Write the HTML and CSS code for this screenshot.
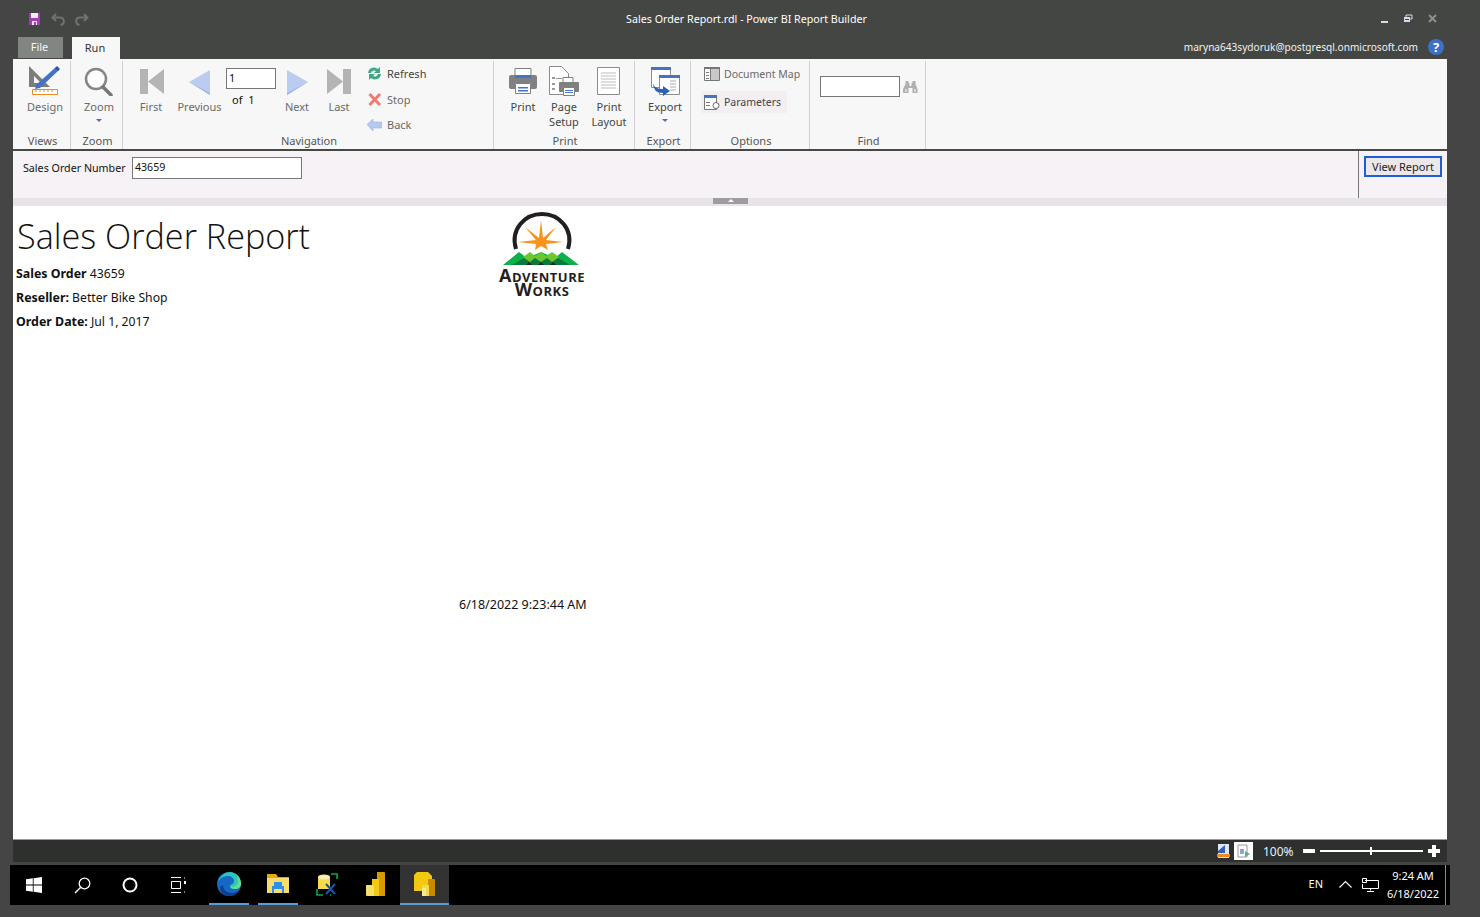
FILE: index.html
```html
<!DOCTYPE html>
<html lang="en">
<head>
    <meta charset="UTF-8">
    <title>Sales Order Report.rdl - Power BI Report Builder</title>
    <link rel="stylesheet" href="styles.css">
</head>
<body>
    <div class="titlebar">
        <div class="quick">
            <svg width="11" height="12" viewBox="0 0 11 12"><path d="M0 0h11v12H0z" fill="#a23bb8"/><path d="M2 0h7v5H2z" fill="#f4eaf6"/><path d="M3 8h5v4H3z" fill="#f4eaf6"/><path d="M5 9h2v3H5z" fill="#a23bb8"/></svg>
            <svg class="undo" width="15" height="13" viewBox="0 0 15 13"><path d="M5 1 1.500 4.500 5 8M2 4.500h7c5 0 5 7 .5 7.500" fill="none" stroke="#6f726f" stroke-width="2"/></svg>
            <svg class="redo" width="15" height="13" viewBox="0 0 15 13"><path d="M10 1l3.500 3.500L10 8M13 4.500H6c-5 0-5 7-.5 7.500" fill="none" stroke="#6f726f" stroke-width="2"/></svg>
        </div>
        <div class="doc-title">Sales Order Report.rdl - Power BI Report Builder</div>
        <div class="win-buttons">
            <svg width="9" height="9" viewBox="0 0 9 9"><path d="M1 7h7v2H1z" fill="#d5dbe8"/></svg>
            <svg width="9" height="9" viewBox="0 0 9 9"><path d="M2 1h6v4H2z" fill="none" stroke="#d5dbe8"/><path d="M0 3h6v5H0z" fill="#d5dbe8"/><path d="M1 5h4v1H1z" fill="#434643"/></svg>
            <svg width="9" height="9" viewBox="0 0 9 9"><path d="M1 1l7 7M8 1 1 8" stroke="#8c908f" stroke-width="2"/></svg>
        </div>
    </div>

    <div class="tabrow">
        <div class="tab tab-file">File</div>
        <div class="tab tab-run">Run</div>
        <div class="account">maryna643sydoruk@postgresql.onmicrosoft.com</div>
        <div class="help">?</div>
    </div>

    <div class="ribbon">
        <div class="group views">
            <div class="items">
                <div class="big w-design">
                    <svg width="32" height="31" viewBox="0 0 32 31"><path d="M0 1v21h21zM5 11v7h7z" fill="#7d7d7d" fill-rule="evenodd"/><path d="M7 20 27 2l3 3-19 18-5 1z" fill="#4472c4"/><path d="M26 3l2-2 3 3-2 2z" fill="#2f5597"/><path d="M3.500 24.500h25v5h-25z" fill="#fff" stroke="#ed8b22"/><path d="M7 25v2M11 25v2M15 25v2M19 25v2M23 25v2" stroke="#ed8b22"/></svg>
                    <span>Design</span>
                </div>
            </div>
            <div class="group-label">Views</div>
        </div>
        <div class="group zoom">
            <div class="items">
                <div class="big w-zoom">
                    <svg width="30" height="31" viewBox="0 0 30 31"><circle cx="12" cy="14" r="10" fill="#fdfdfd" stroke="#858585" stroke-width="2.500"/><path d="M19 22l8 8" stroke="#777" stroke-width="3.500" stroke-linecap="round"/></svg>
                    <span>Zoom</span>
                    <i class="caret"></i>
                </div>
            </div>
            <div class="group-label">Zoom</div>
        </div>
        <div class="group nav">
            <div class="items">
                <div class="big w-first">
                    <svg width="24" height="31" viewBox="0 0 24 31"><path d="M0 4h8v25H0zM8 16.500 24 4v25z" fill="#b4b4b4"/></svg>
                    <span>First</span>
                </div>
                <div class="big w-prev">
                    <svg width="21" height="31" viewBox="0 0 21 31"><path d="M0 17 21 5v25z" fill="#bccbf0"/><path d="M0 17l21 13v-2z" fill="#9fb3e3"/></svg>
                    <span>Previous</span>
                </div>
                <div class="page-box">
                    <div class="page-input">1</div>
                    <div class="page-of">of&nbsp; 1</div>
                </div>
                <div class="big w-next">
                    <svg width="21" height="31" viewBox="0 0 21 31"><path d="M21 17 0 5v25z" fill="#bccbf0"/><path d="M21 17 0 30v-2z" fill="#9fb3e3"/></svg>
                    <span>Next</span>
                </div>
                <div class="big w-last">
                    <svg width="24" height="31" viewBox="0 0 24 31"><path d="M16 4h8v25h-8zM16 16.500 0 4v25z" fill="#b4b4b4"/></svg>
                    <span>Last</span>
                </div>
                <div class="small-col">
                    <div class="small on">
                        <svg width="15" height="15" viewBox="0 0 15 15"><path d="M1 7a6 6 0 0 1 10-4l2-2v6H7l2-2a3.500 3.500 0 0 0-5 2z" fill="#43a586"/><path d="M14 8a6 6 0 0 1-10 4l-2 2V8h6l-2 2a3.500 3.500 0 0 0 5-2z" fill="#43a586"/></svg>
                        <span>Refresh</span>
                    </div>
                    <div class="small">
                        <svg width="15" height="15" viewBox="0 0 15 15"><path d="M2.500 2l10.500 11M13 2 2.500 13" stroke="#f07a70" stroke-width="3"/></svg>
                        <span>Stop</span>
                    </div>
                    <div class="small">
                        <svg width="15" height="15" viewBox="0 0 15 15"><path d="M0 7.500 6 2v3h9v6H6v3z" fill="#b6c8ef" stroke="#9fb3e3" stroke-width=".6"/></svg>
                        <span>Back</span>
                    </div>
                </div>
            </div>
            <div class="group-label">Navigation</div>
        </div>
        <div class="group print">
            <div class="items">
                <div class="big w-print">
                    <svg width="28" height="31" viewBox="0 0 28 31"><path d="M6 3.500h16v8H6z" fill="#fff" stroke="#808080"/><path d="M2 10h24q2 0 2 2v10q0 2-2 2h-4v-6H6v6H2q-2 0-2-2V12q0-2 2-2z" fill="#808080"/><path d="M6 10h16v3H6z" fill="#4472c4"/><path d="M6.500 18.500h15v10h-15z" fill="#fff" stroke="#808080"/><path d="M9 22h10v1.500H9zM9 25h10v1.500H9z" fill="#4472c4"/></svg>
                    <span>Print</span>
                </div>
                <div class="big w-setup">
                    <svg width="30" height="31" viewBox="0 0 30 31"><path d="M.5 1.500h12l7 7v21H.5z" fill="#fff" stroke="#8c8c8c"/><path d="M3 12h3v2H3zM3 18h3v2H3zM3 23h3v2H3zM7 13h6v1H7z" fill="#999"/><path d="M14 12.500h10v6H14z" fill="#fff" stroke="#808080"/><path d="M11 17h18q1 0 1 1v8q0 1-1 1h-3v-4H14v4h-3q-1 0-1-1v-8q0-1 1-1z" fill="#808080"/><path d="M14.500 22.500h11v8h-11z" fill="#fff" stroke="#808080"/><path d="M16 25h8v1H16zM16 27h8v1H16z" fill="#4472c4"/></svg>
                    <span>Page<br>Setup</span>
                </div>
                <div class="big w-layout">
                    <svg width="24" height="31" viewBox="0 0 24 31"><path d="M.5 2.500h22v27H.5z" fill="#fff" stroke="#8c8c8c"/><path d="M4 8h15M4 11h15M4 14h15M4 17h15M4 20h15M4 23h15" stroke="#bdbdbd"/></svg>
                    <span>Print<br>Layout</span>
                </div>
            </div>
            <div class="group-label">Print</div>
        </div>
        <div class="group export">
            <div class="items">
                <div class="big w-export">
                    <svg width="29" height="31" viewBox="0 0 29 31"><path d="M.5 2.500h19v20H.5z" fill="#fff" stroke="#8c8c8c"/><path d="M0 2h20v3H0z" fill="#4472c4"/><path d="M8.500 10.500h20v19h-20z" fill="#fff" stroke="#8c8c8c"/><path d="M8 10h21v3H8z" fill="#4472c4"/><path d="M19 16h6M19 19h6M19 22h6M19 25h6" stroke="#aaa"/><path d="M2 18q1 6 10 6v-3l7 5-7 5v-3Q2 28 2 18z" fill="#2f62b5"/></svg>
                    <span>Export</span>
                    <i class="caret"></i>
                </div>
            </div>
            <div class="group-label">Export</div>
        </div>
        <div class="group options">
            <div class="items">
                <div class="small-col">
                    <div class="small">
                        <svg width="16" height="14" viewBox="0 0 16 14"><path d="M.5.500h15v13H.5z" fill="#fff" stroke="#777"/><path d="M0 0h16v2H0zM6 2h1v12H6z" fill="#777"/><path d="M7 2h8v11H7z" fill="#c8c8c8"/><path d="M2 5h3v1H2zM2 8h3v1H2zM2 11h3v1H2z" fill="#777"/></svg>
                        <span>Document Map</span>
                    </div>
                    <div class="small picked">
                        <svg width="16" height="16" viewBox="0 0 16 16"><path d="M.5 1.500h12v14H.5z" fill="#fff" stroke="#777"/><path d="M0 1h13v3H0z" fill="#4472c4"/><path d="M2 8h4v1H2zM2 11h4v1H2z" fill="#777"/><circle cx="12" cy="11.500" r="3" fill="#fff" stroke="#666"/></svg>
                        <span>Parameters</span>
                    </div>
                </div>
            </div>
            <div class="group-label">Options</div>
        </div>
        <div class="group find">
            <div class="items">
                <div class="find-input"></div>
                <svg class="binoculars" width="15" height="14" viewBox="0 0 15 14"><path d="M2.500 1h3v2h1v3h2V3h1V1h3v3l2 5v4H9.500V8h-4v5H0V9l2.500-5z" fill="#b0b0b0"/><path d="M2 9h2v3H2zM11 9h2v3h-2z" fill="#d8d8d8"/></svg>
            </div>
            <div class="group-label">Find</div>
        </div>
    </div>

    <div class="params">
        <div class="param-fields">
            <label class="param-label">Sales Order Number</label>
            <div class="param-input">43659</div>
        </div>
        <div class="param-action">
            <div class="view-btn">View Report</div>
        </div>
    </div>
    <div class="splitter"><div class="grip"></div></div>

    <div class="report">
        <div class="report-head">
            <div class="report-info">
                <h1>Sales Order Report</h1>
                <p><b>Sales Order</b> 43659</p>
                <p><b>Reseller:</b> Better Bike Shop</p>
                <p><b>Order Date:</b> Jul 1, 2017</p>
            </div>
            <div class="logo">
                <svg width="88" height="56" viewBox="0 0 88 56">
                    <path d="M18 38C12 18 27 3 44 3s32 15 26 35" fill="none" stroke="#231f20" stroke-width="4"/>
                    <path d="M43 9l2 18 13-11-10 13 17 2-17 2 2 6-7-4-6 4 1-6-18-2 18-2-11-13 14 11z" fill="#f7941d"/>
                    <path d="M5 54 21 41l8 6 14-6 14 6 7-6 17 13z" fill="#0db14b"/>
                    <path d="M25 46l7-5 5 4 6-4 5 4 6-4 7 5-6 5H31z" fill="#6cc72e"/>
                    <path d="M14 54l12-7 6 4 5-4 6 4 6-4 5 4 6-4 12 7z" fill="#0a7a3a"/>
                    <path d="M28 54l3-3 3 3zM40 54l3-3 3 3zM52 54l3-3 3 3z" fill="#231f20"/>
                </svg>
                <div class="logo-line">Adventure</div>
                <div class="logo-line">Works</div>
            </div>
        </div>
        <div class="report-stamp">6/18/2022 9:23:44 AM</div>
    </div>

    <div class="statusbar">
        <svg class="st-icon" width="13" height="14" viewBox="0 0 13 14"><path d="M1 0h11v14H1z" fill="#dfe6f2"/><path d="M1 7l7-6v8H1z" fill="#2f62b5"/><path d="M0 10h13v3H0z" fill="#ed8b22"/></svg>
        <div class="st-print">
            <svg width="14" height="14" viewBox="0 0 14 14"><path d="M1 1h9v12H1z" fill="#fff" stroke="#999"/><path d="M3 5h4v5H3z" fill="#8aa4d6"/><path d="M8 7l5 3-5 3z" fill="#59b08d"/></svg>
        </div>
        <div class="st-percent">100%</div>
        <div class="st-minus"></div>
        <div class="st-slider"><i></i></div>
        <div class="st-plus"></div>
    </div>

    <div class="taskbar">
        <div class="tb-btn">
            <svg width="16" height="16" viewBox="0 0 16 16"><path d="M0 2.300 6.800 1.300v6.300H0zM7.600 1.200 16 0v7.600H7.600zM0 8.400h6.800v6.300L0 13.700zM7.600 8.400H16V16l-8.400-1.200z" fill="#fff"/></svg>
        </div>
        <div class="tb-btn">
            <svg width="17" height="17" viewBox="0 0 17 17"><circle cx="10.500" cy="6.500" r="5.300" fill="none" stroke="#fff" stroke-width="1.300"/><path d="M6.500 10.500 1 16" stroke="#fff" stroke-width="1.500"/></svg>
        </div>
        <div class="tb-btn">
            <svg width="16" height="16" viewBox="0 0 16 16"><circle cx="8" cy="8" r="6.500" fill="none" stroke="#fff" stroke-width="2"/></svg>
        </div>
        <div class="tb-btn tb-gap">
            <svg width="16" height="16" viewBox="0 0 16 16"><path d="M1 .500h10M1 15.500h10M1.500 4.500h9v7h-9z" fill="none" stroke="#fff"/><path d="M14 4h2v3h-2zM14 .5h1v1h-1zM14 14.500h1v1h-1z" fill="#fff"/></svg>
        </div>
        <div class="tb-app running">
            <svg width="24" height="24" viewBox="0 0 24 24"><circle cx="12" cy="12" r="12" fill="#1668c4"/><path d="M1 10C3 3 9 0 13 0c6 0 11 5 11 12 0 3-3 5-6 5-4 0-5-2-5-3 0-2 4-1 4-5 0-3-3-5-6-5-4 0-8 2-10 6z" fill="#2bc6b8"/><path d="M20 3c3 3 4 6 4 9 0 3-3 5-6 5-3 0-4-1-5-2 3 0 8-1 8-5 0-3-1-5-1-7z" fill="#5fe08c"/><path d="M6 13c0 5 4 8 9 8 3 0 5-1 7-3-2 4-6 6-10 6-5 0-9-4-9-9z" fill="#0c3f94"/></svg>
        </div>
        <div class="tb-app running">
            <svg width="22" height="20" viewBox="0 0 22 20"><path d="M0 0h9l2 3h11v16H0z" fill="#e8a80e"/><path d="M0 4h22v15H0z" fill="#fadc6c"/><path d="M5 12h12v7h-2v-4H7v4H5z" fill="#2f8ee0"/><path d="M7 8h8v4H7z" fill="#2f8ee0"/></svg>
        </div>
        <div class="tb-app">
            <svg width="22" height="23" viewBox="0 0 22 23"><path d="M2 5c0-4 12-4 12 0v11H2z" fill="#f5dc4e"/><ellipse cx="8" cy="4" rx="6" ry="2.500" fill="#f9ecb0"/><path d="M15 1h6v5M1 16v6h6M15 22h-1" fill="none" stroke="#0aa64a" stroke-width="1.600"/><path d="M10 11l9 10M19 11l-9 10" stroke="#1a55b0" stroke-width="2"/></svg>
        </div>
        <div class="tb-app">
            <svg width="19" height="24" viewBox="0 0 19 24"><path d="M11 0h7q1 0 1 1v23h-8z" fill="#d99a00"/><path d="M6 7h7v17H6z" fill="#f2c811"/><path d="M0 13h7q1 0 1 1v10H1q-1 0-1-1z" fill="#f7e06a"/></svg>
        </div>
        <div class="tb-app running active">
            <svg width="21" height="25" viewBox="0 0 21 25"><path d="M3 0h11l4 4v15H0V3z" fill="#f2c811"/><path d="M14 7h6q1 0 1 1v16h-7z" fill="#c98a00"/><path d="M8 13h7v11H8z" fill="#f5d94a"/><path d="M8 16h4v8H9q-1 0-1-1z" fill="#f8ea94"/></svg>
        </div>
        <div class="tray">
            <span class="tray-lang">EN</span>
            <svg class="tray-chevron" width="13" height="8" viewBox="0 0 13 8"><path d="M.5 7.500l6-6 6 6" fill="none" stroke="#fff" stroke-width="1.200"/></svg>
            <svg class="tray-net" width="17" height="14" viewBox="0 0 17 14"><path d="M3 2.500h13.500v8H.5V6" fill="none" stroke="#fff"/><path d="M.5.500h4v4h-4zM8.500 10.500v2M5 13.500h7" fill="none" stroke="#fff"/></svg>
            <div class="clock"><div>9:24 AM</div><div>6/18/2022</div></div>
        </div>
    </div>
</body>
</html>
```

FILE: styles.css
```css
html, body {
    margin: 0;
    height: 917px;
    overflow: hidden;
}
body {
    background-color: #454545;
    font-family: "Noto Sans", Arial, sans-serif;
    font-size: 11px;
    color: #444;
}
svg {
    display: block;
    flex: none;
}
.titlebar {
    display: grid;
    grid-template-columns: 1fr auto 1fr;
    align-items: center;
    height: 37px;
    margin-left: 13px;
    background-color: #434643;
    color: #fff;
}
.quick {
    display: flex;
    align-items: center;
    padding: 1px 0 0 16px;
}
.undo {
    margin-left: 11px;
}
.redo {
    margin-left: 8px;
}
.doc-title {
    font-size: 10.700px;
}
.win-buttons {
    display: flex;
    justify-content: flex-end;
    gap: 15px;
    padding-right: 43px;
}
.tabrow {
    display: flex;
    align-items: flex-start;
    width: 1434px;
    height: 22px;
    margin-left: 13px;
    background-color: #434643;
}
.tab {
    display: flex;
    align-items: center;
    justify-content: center;
    box-sizing: border-box;
    padding: 0 2px 2px 0;
}
.tab-file {
    width: 45px;
    height: 21px;
    margin-left: 5px;
    background-color: #828682;
    color: #f4f4f4;
}
.tab-run {
    width: 48px;
    height: 22px;
    margin-left: 9px;
    background-color: #f7f7f7;
    color: #333;
}
.account {
    margin-left: auto;
    color: #f2f2f2;
    font-size: 10.100px;
    line-height: 20px;
}
.help {
    width: 16px;
    height: 16px;
    margin: 2px 3px 0 10px;
    border-radius: 50%;
    background-color: #3f6fc6;
    color: #fff;
    font-size: 13px;
    font-weight: 700;
    line-height: 16px;
    text-align: center;
}
.ribbon {
    display: flex;
    width: 1434px;
    height: 90px;
    margin-left: 13px;
    background-color: #f7f7f7;
}
.group {
    display: flex;
    flex-direction: column;
    box-sizing: border-box;
    height: 88px;
    margin-top: 2px;
    border-right: 1px solid #cfcfcf;
}
.views { width: 58px; }
.zoom { width: 52px; }
.nav { width: 371px; }
.print { width: 141px; }
.export { width: 56px; }
.options { width: 119px; }
.find { width: 116px; }
.items {
    display: flex;
    flex: none;
    box-sizing: border-box;
    height: 73px;
    padding-top: 4px;
}
.group-label {
    padding-left: 2px;
    line-height: 14px;
    text-align: center;
    color: #555;
}
.big {
    display: flex;
    flex-direction: column;
    align-items: center;
    flex: none;
    line-height: 15px;
    text-align: center;
    color: #6a6a6a;
}
.big svg {
    margin-bottom: 3px;
}
.big.w-print, .big.w-setup, .big.w-layout, .big.w-export {
    color: #444;
}
.w-design { width: 50px; margin-left: 7px; }
.w-zoom { width: 40px; margin-left: 8px; }
.w-first { width: 30px; margin-left: 13px; }
.w-first svg { margin-left: 2px; }
.w-prev { width: 49px; margin-left: 9px; }
.w-next { width: 34px; margin-left: 4px; }
.w-last { width: 34px; margin-left: 8px; }
.w-print { width: 32px; margin-left: 13px; }
.w-setup { width: 36px; margin-left: 7px; }
.w-layout { width: 40px; margin-left: 7px; }
.w-export { width: 40px; margin-left: 10px; }
.caret {
    width: 0;
    height: 0;
    margin-top: 5px;
    border-left: 3px solid transparent;
    border-right: 3px solid transparent;
    border-top: 3px solid #5a6ea8;
}
.page-box {
    width: 50px;
    margin-left: 2px;
    padding-top: 3px;
}
.page-input {
    box-sizing: border-box;
    height: 21px;
    padding-left: 2px;
    border: 1px solid #777;
    background-color: #fff;
    color: #111;
    line-height: 18px;
}
.page-of {
    padding-left: 6px;
    line-height: 22px;
    color: #111;
}
.small-col {
    display: flex;
    flex-direction: column;
    margin: -4px 0 0 11px;
}
.small {
    display: flex;
    align-items: center;
    flex: none;
    gap: 5px;
    height: 25.500px;
    line-height: 15px;
    white-space: nowrap;
    color: #6a6a6a;
}
.small.on {
    color: #444;
}
.options .small-col {
    align-items: flex-start;
    margin: -2px 0 0 10px;
}
.options .small {
    gap: 4px;
    height: 22px;
    padding: 0 6px 0 3px;
    font-size: 10.500px;
}
.options .small + .small {
    margin-top: 6px;
}
.picked {
    background-color: #f2eef2;
    color: #444;
}
.find-input {
    box-sizing: border-box;
    width: 80px;
    height: 21px;
    margin: 11px 0 0 10px;
    border: 1px solid #777;
    background-color: #fff;
}
.binoculars {
    margin: 15px 0 0 3px;
}
.params {
    display: flex;
    justify-content: space-between;
    box-sizing: border-box;
    width: 1434px;
    height: 49px;
    margin-left: 13px;
    border-top: 2px solid #464846;
    background-color: #f6f2f6;
}
.param-fields {
    display: flex;
    align-items: flex-start;
    padding: 6px 0 0 10px;
}
.param-label {
    width: 103px;
    color: #111;
    font-size: 10.700px;
    line-height: 22px;
    white-space: nowrap;
}
.param-input {
    box-sizing: border-box;
    width: 170px;
    height: 22px;
    margin-left: 6px;
    padding-left: 2px;
    border: 1px solid #777;
    background-color: #fff;
    color: #111;
    font-size: 10.600px;
    line-height: 18px;
}
.param-action {
    box-sizing: border-box;
    width: 89px;
    padding: 5px 0 0 5px;
    border-left: 1px solid #777;
}
.view-btn {
    box-sizing: border-box;
    width: 78px;
    height: 21px;
    border: 2px solid #1a5fd8;
    background-color: #ebe7eb;
    color: #222;
    line-height: 17px;
    text-align: center;
}
.splitter {
    display: flex;
    justify-content: center;
    width: 1434px;
    height: 8px;
    margin-left: 13px;
    background-color: #e8e3e8;
}
.grip {
    position: relative;
    width: 35px;
    height: 6px;
    background-color: #9d9d9d;
}
.grip::after {
    content: "";
    position: absolute;
    left: 15px;
    top: 1px;
    border-left: 3px solid transparent;
    border-right: 3px solid transparent;
    border-bottom: 3px solid #fff;
}
.report {
    box-sizing: border-box;
    width: 1434px;
    height: 634px;
    margin-left: 13px;
    background-color: #fff;
    border-bottom: 1px solid #9a9a9a;
    color: #111;
}
.report-head {
    display: flex;
    align-items: flex-start;
}
.report-info {
    width: 482px;
    padding: 6px 0 0 3px;
    box-sizing: border-box;
}
.report-info h1 {
    margin: 0 0 2px 1px;
    font-family: "Open Sans", sans-serif;
    font-size: 34.200px;
    font-weight: 300;
    line-height: 48px;
    color: #111;
}
.report-info p {
    margin: 0;
    font-size: 12.200px;
    line-height: 24px;
}
.report-info b {
    font-size: 12.400px;
}
.logo {
    width: 88px;
    margin: 5px 0 0 3px;
    text-align: center;
}
.logo-line {
    height: 14px;
    padding-top: 1px;
    margin-bottom: -1px;
    font-family: "Open Sans", sans-serif;
    font-size: 18px;
    font-weight: 700;
    font-variant: small-caps;
    letter-spacing: .5px;
    line-height: 14px;
    color: #231f20;
    white-space: nowrap;
}
.report-stamp {
    margin: 262px 0 0 446px;
    font-size: 12.500px;
    line-height: 18px;
}
.statusbar {
    display: flex;
    align-items: center;
    box-sizing: border-box;
    width: 1434px;
    height: 22px;
    margin-left: 13px;
    padding-right: 7px;
    justify-content: flex-end;
    background-color: #2d302d;
}
.st-print {
    display: flex;
    align-items: center;
    justify-content: center;
    width: 19px;
    height: 18px;
    margin-left: 4px;
    background-color: #fff;
}
.st-percent {
    width: 40px;
    margin-left: 10px;
    color: #e6efff;
    font-size: 12px;
}
.st-minus {
    width: 12px;
    height: 4px;
    background-color: #fff;
}
.st-slider {
    position: relative;
    width: 103px;
    height: 2px;
    margin: 0 5px;
    background-color: #fff;
}
.st-slider i {
    position: absolute;
    left: 50px;
    top: -3px;
    width: 2px;
    height: 8px;
    background-color: #fff;
}
.st-plus {
    width: 12px;
    height: 12px;
    background:
        linear-gradient(#fff, #fff) center / 12px 4px no-repeat,
        linear-gradient(#fff, #fff) center / 4px 12px no-repeat;
}
.taskbar {
    display: flex;
    align-items: stretch;
    box-sizing: border-box;
    width: 1440px;
    height: 40px;
    margin: 3px 0 0 10px;
    background-color: #000;
}
.tb-btn {
    display: flex;
    align-items: center;
    justify-content: center;
    width: 48px;
}
.tb-gap {
    margin-right: 2px;
}
.tb-app {
    display: flex;
    align-items: center;
    justify-content: center;
    box-sizing: border-box;
    width: 49px;
    border-bottom: 2px solid transparent;
}
.tb-app.running {
    position: relative;
}
.tb-app.running::after {
    content: "";
    position: absolute;
    left: 5px;
    right: 4px;
    bottom: -2px;
    height: 2px;
    background-color: #5b9bd5;
}
.tb-app.active {
    background-color: #333;
}
.tb-app.active::after {
    left: 0;
    right: 0;
}
.tray {
    display: flex;
    align-items: center;
    margin: 0 4px 0 auto;
    padding-right: 5px;
    border-right: 1px solid #8a8a8a;
    color: #fff;
    font-size: 11px;
}
.tray-lang {
    padding-bottom: 4px;
}
.tray-chevron {
    margin: 0 0 2px 16px;
}
.tray-net {
    margin-left: 10px;
}
.clock {
    width: 54px;
    margin-left: 7px;
    line-height: 18px;
    text-align: center;
}
```
